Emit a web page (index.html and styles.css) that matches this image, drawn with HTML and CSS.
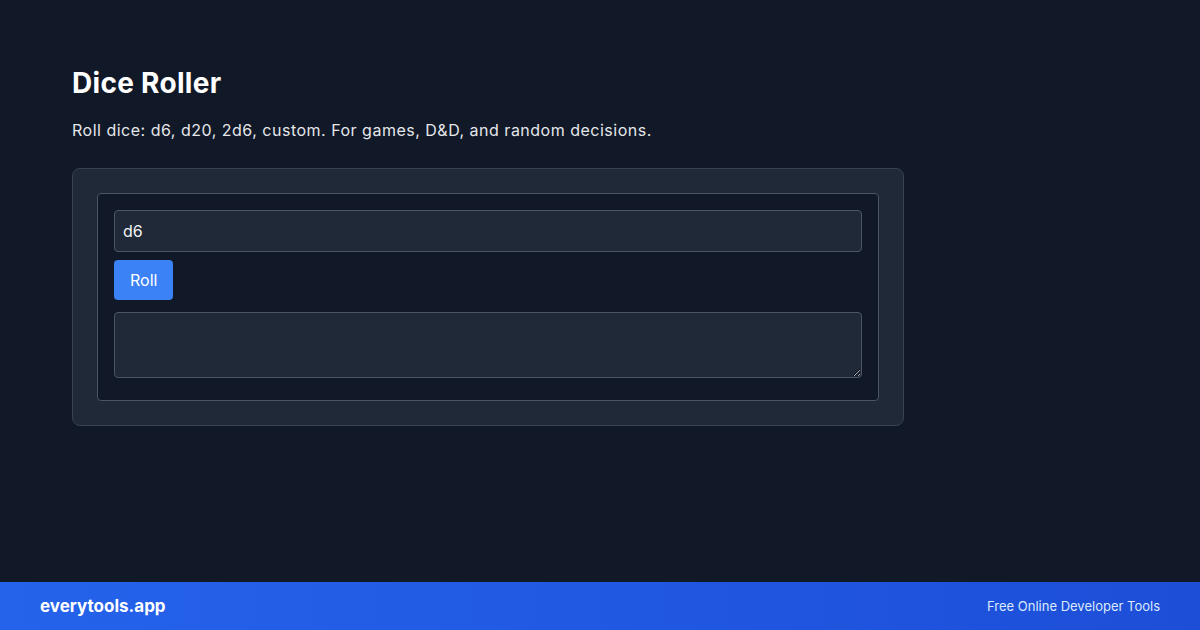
FILE: index.html
```html
<!DOCTYPE html>
<html lang="en">
<head>
<meta charset="utf-8">
<title>Dice Roller</title>
<link rel="stylesheet" href="styles.css">
</head>
<body>
<main class="page">
  <h1 class="title">Dice Roller</h1>
  <p class="lead">Roll dice: d6, d20, 2d6, custom. For games, D&amp;D, and random decisions.</p>
  <section class="card">
    <div class="tool">
      <input class="field" type="text" value="d6">
      <div class="actions"><button class="btn" type="button">Roll</button></div>
      <textarea class="output" readonly></textarea>
    </div>
  </section>
</main>
<footer class="footer">
  <span class="brand">everytools.app</span>
  <span class="tagline">Free Online Developer Tools</span>
</footer>
</body>
</html>
```

FILE: styles.css
```css
* { box-sizing: border-box; }

html, body {
  margin: 0;
  height: 100%;
}

body {
  background: #111827;
  color: #f9fafb;
  font-family: Inter, "Noto Sans", "Liberation Sans", sans-serif;
  display: flex;
  flex-direction: column;
  overflow: hidden;
}

.page {
  flex: 1;
  padding: 66px 72px 0;
}

.title {
  margin: 0;
  font-size: 28px;
  line-height: 34px;
  font-weight: 700;
  color: #ffffff;
  letter-spacing: 0.3px;
}

.lead {
  margin: 18px 0 0;
  font-size: 16px;
  line-height: 24px;
  color: #e5e7eb;
  letter-spacing: 0.5px;
}

.card {
  margin-top: 26px;
  width: 832px;
  background: #1f2937;
  border: 1px solid #374151;
  border-radius: 8px;
  padding: 24px;
}

.tool {
  background: #111827;
  border: 1px solid #4b5563;
  border-radius: 4px;
  padding: 16px 16px 22px;
  display: flex;
  flex-direction: column;
}

.field {
  height: 42px;
  width: 100%;
  background: #1f2937;
  border: 1px solid #4b5563;
  border-radius: 4px;
  padding: 0 8px;
  color: #f3f4f6;
  font: 16px Inter, "Noto Sans", sans-serif;
  outline: none;
}

.actions {
  margin-top: 8px;
  display: flex;
}

.btn {
  height: 40px;
  padding: 0 16px;
  background: #3b82f6;
  color: #ffffff;
  border: 0;
  border-radius: 4px;
  font: 16px Inter, "Noto Sans", sans-serif;
}

.output {
  margin-top: 12px;
  height: 66px;
  width: 100%;
  background: #1f2937;
  border: 1px solid #4b5563;
  border-radius: 4px;
  color: #f3f4f6;
  font: 14px Inter, sans-serif;
  resize: vertical;
}

.footer {
  height: 48px;
  flex: none;
  background: linear-gradient(90deg, #2563eb, #1d4ed8);
  display: flex;
  align-items: center;
  justify-content: space-between;
  padding: 0 40px;
}

.brand {
  font-size: 17px;
  font-weight: 700;
  color: #ffffff;
}

.tagline {
  font-size: 13px;
  color: #dbeafe;
}
```
